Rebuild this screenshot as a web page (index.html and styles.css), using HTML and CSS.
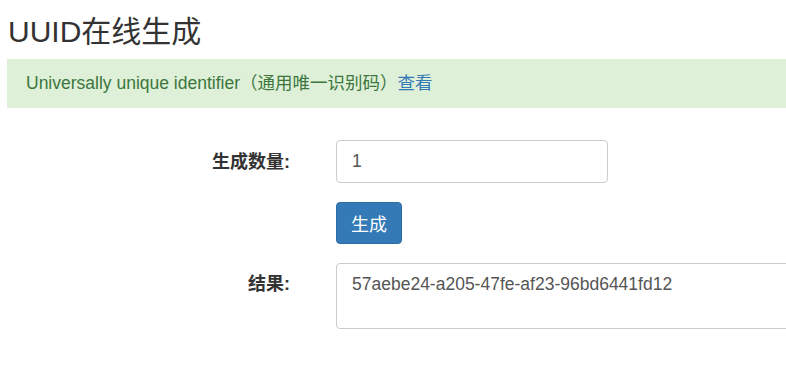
FILE: index.html
```html
<!DOCTYPE html>
<html lang="zh-CN">
<head>
    <meta charset="utf-8">
    <title>UUID在线生成</title>
<link rel="stylesheet" href="styles.css">
</head>
<body>
    <div id="page">
        <h2 class="title">UUID在线生成</h2>
        <div class="alert">Universally unique identifier（通用唯一识别码）<a href="#">查看</a></div>
        <form class="form">
            <label class="label" for="count">生成数量:</label>
            <div class="ctrl"><input class="input" id="count" type="text" value="1"></div>
            <div></div>
            <div class="ctrl"><button class="btn" type="button">生成</button></div>
            <label class="label label-top" for="result">结果:</label>
            <div class="ctrl"><textarea class="result" id="result">57aebe24-a205-47fe-af23-96bd6441fd12</textarea></div>
        </form>
    </div>
</body>
</html>
```

FILE: styles.css
```css
html, body{
    margin: 0;
    padding: 0;
    background: #fff;
}
body{
    font-family: "Liberation Sans", "Noto Sans CJK SC", sans-serif;
    color: #333;
    font-size: 17.5px;
}
#page{
    padding-left: 7px;
    overflow: hidden;
    width: 779px;
}
.title{
    font-size: 30px;
    font-weight: normal;
    line-height: 33px;
    margin: 15px 0 11px 1px;
}
.alert{
    background-color: #dff0d8;
    color: #3c763d;
    padding: 15px 19px;
    line-height: 19px;
    margin-right: -20px;
}
.alert a{
    color: #337ab7;
    text-decoration: none;
}
.form{
    display: grid;
    grid-template-columns: 283px 1fr;
    column-gap: 46px;
    row-gap: 19px;
    margin-top: 32px;
}
.label{
    font-weight: bold;
    font-size: 18px;
    text-align: right;
    align-self: center;
    line-height: 20px;
}
.label-top{
    align-self: start;
    padding-top: 11px;
}
.input, .result{
    box-sizing: border-box;
    border: 1px solid #ccc;
    border-radius: 4px;
    font-family: inherit;
    font-size: 17.5px;
    color: #555;
    padding: 0 15px;
    outline: none;
    display: block;
}
.input{
    width: 272px;
    height: 43px;
}
.result{
    width: 520px;
    height: 66px;
    padding-top: 10px;
    line-height: 20px;
    resize: none;
}
.btn{
    display: block;
    height: 42px;
    padding: 0 14px;
    background-color: #337ab7;
    border: 1px solid #2e6da4;
    border-radius: 4px;
    color: #fff;
    font-family: inherit;
    font-size: 18px;
    cursor: pointer;
}
```
